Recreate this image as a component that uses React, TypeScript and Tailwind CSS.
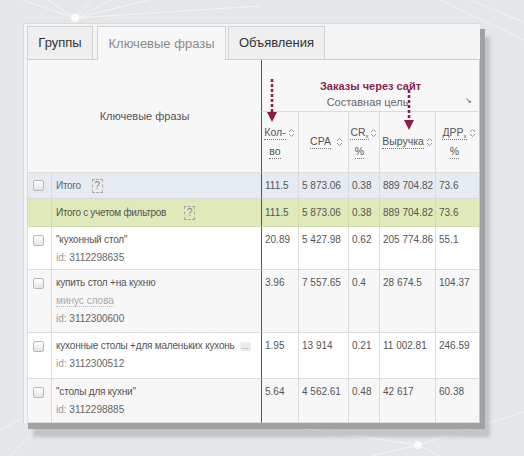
import React from "react";

type Row = {
  id: string;
  label: string;
  extra?: "minus" | "more";
  qty: string;
  cpa: string;
  cr: string;
  revenue: string;
  drr: string;
  height: string;
  bg: string;
};

const rows: Row[] = [
  { id: "3112298635", label: "\"кухонный стол\"", qty: "20.89", cpa: "5 427.98", cr: "0.62", revenue: "205 774.86", drr: "55.1", height: "h-[43px]", bg: "bg-white" },
  { id: "3112300600", label: "купить стол +на кухню", extra: "minus", qty: "3.96", cpa: "7 557.65", cr: "0.4", revenue: "28 674.5", drr: "104.37", height: "h-[63px]", bg: "bg-[#f7f7f7]" },
  { id: "3112300512", label: "кухонные столы +для маленьких кухонь", extra: "more", qty: "1.95", cpa: "13 914", cr: "0.21", revenue: "11 002.81", drr: "246.59", height: "h-[46px]", bg: "bg-white" },
  { id: "3112298885", label: "\"столы для кухни\"", qty: "5.64", cpa: "4 562.61", cr: "0.48", revenue: "42 617", drr: "60.38", height: "h-[44px]", bg: "bg-[#f7f7f7]" },
];

const totals = ["111.5", "5 873.06", "0.38", "889 704.82", "73.6"];

const Checkbox = () => (
  <span className="inline-block w-[11px] h-[11px] rounded-[2px] border border-[#b8b8b8] bg-linear-to-b from-white to-[#e4e4e4]" />
);

const Hint = () => (
  <span className="inline-flex items-center justify-center w-[11px] h-[14px] border border-dashed border-[#a8a8a8] text-[#888] text-[10px] leading-none">?</span>
);

const SortIcon = () => (
  <svg width="7" height="10" viewBox="0 0 7 10" className="shrink-0">
    <path d="M1 4 L3.5 1.5 L6 4" fill="none" stroke="#9a9a9a" strokeWidth="1" />
    <path d="M1 6 L3.5 8.5 L6 6" fill="none" stroke="#9a9a9a" strokeWidth="1" />
  </svg>
);

const Dotted = ({ children }: { children: React.ReactNode }) => (
  <span className="border-b border-dotted border-[#777] leading-[13px]">{children}</span>
);

type HeadProps = { first: React.ReactNode; second?: React.ReactNode; pr?: string };

const HeadCell = ({ first, second, pr = "pr-[2px]" }: HeadProps) => (
  <th className={`border-l border-b border-[#dcdcdc] align-middle font-normal p-0 ${pr}`}>
    <div className="flex items-start">
      <div className="flex-1 flex flex-col items-center gap-[5px]">
        <Dotted>{first}</Dotted>
        {second && <Dotted>{second}</Dotted>}
      </div>
      <div className="pt-[2px]">
        <SortIcon />
      </div>
    </div>
  </th>
);

const num = "border-l border-b border-[#dcdcdc] align-top pl-[3px] pt-[4px] leading-[18px] whitespace-nowrap";

const App = () => {
  return (
    <div className="relative w-[524px] h-[456px] overflow-hidden bg-[#e4e7ea] pl-[23px] pt-[23px] font-['Liberation_Sans',Arial,sans-serif] text-[#555]">
      {/* background lines */}
      <svg className="absolute inset-0 pointer-events-none" width="524" height="456">
        <g stroke="#ffffff" strokeOpacity="0.5" strokeWidth="1" fill="none">
          <path d="M75 18 L22 0" />
          <path d="M75 18 L48 0" />
          <path d="M75 18 L92 0" />
          <path d="M75 18 L112 0" />
          <path d="M75 18 L150 0" />
          <path d="M75 18 L260 6" />
          <path d="M440 0 L524 40" />
          <path d="M470 0 L524 22" />
          <path d="M418 445 L524 412" />
          <path d="M418 445 L300 428" />
          <path d="M418 445 L372 456" />
          <path d="M418 445 L440 456" />
          <path d="M0 430 L70 392" />
          <path d="M10 456 L45 420" />
        </g>
        <circle cx="75" cy="18" r="4" fill="#ffffff" fillOpacity="0.8" />
        <circle cx="418" cy="445" r="4" fill="#ffffff" fillOpacity="0.7" />
      </svg>

      <div className="relative w-[457px] h-[400px] bg-[#f3f3f3] border-t border-l border-[#dadada] pl-[3px] pt-[3px] shadow-[5px_6px_0_#a1a1a1,10px_14px_3px_rgba(150,155,160,0.45)]">
        {/* tabs */}
        <div className="flex items-end h-[33px] border-b border-[#cfcfcf] text-[13px]">
          <div className="w-[66px] h-[33px] flex items-center justify-center border border-b-0 border-[#d2d2d2] bg-[#efefef] text-[#333]">Группы</div>
          <div className="ml-[4px] w-[129px] h-[34px] -mb-px flex items-center justify-center border border-b-0 border-[#d2d2d2] bg-[#f7f7f7] text-[#8a8a8a]">Ключевые фразы</div>
          <div className="ml-[2px] w-[97px] h-[33px] flex items-center justify-center border border-b-0 border-[#d2d2d2] bg-[#efefef] text-[#333]">Объявления</div>
        </div>

        {/* table */}
        <table className="table-fixed border-separate border-spacing-0 w-[453px] text-[10px]">
          <colgroup>
            <col className="w-[24px]" />
            <col className="w-[210px]" />
            <col className="w-[37px]" />
            <col className="w-[50px]" />
            <col className="w-[31px]" />
            <col className="w-[56px]" />
            <col className="w-[45px]" />
          </colgroup>
          <thead className="bg-[#f7f7f7]">
            <tr className="h-[52px]">
              <th colSpan={2} rowSpan={2} className="border-l border-b border-[#dcdcdc] font-normal text-[11px] text-[#555] align-middle pt-[1px]">
                Ключевые фразы
              </th>
              <th colSpan={5} className="relative border-l border-l-[#555] border-b border-b-[#dcdcdc] border-r border-r-[#c8c8c8] align-bottom pb-[1px] font-normal">
                <div className="text-[11px] leading-[16px] font-bold text-[#8b1f4d]">Заказы через сайт</div>
                <div className="text-[11px] leading-[16px] text-[#666] pr-[6px]">Составная цель</div>
                <span className="absolute right-[7px] bottom-[6px] text-[8px] text-[#555] leading-none">↘</span>
              </th>
            </tr>
            <tr className="h-[61px] text-[10.5px] text-[#555]">
              <th className="border-l border-b border-l-[#555] border-b-[#dcdcdc] align-middle font-normal p-0 pr-[3px]">
                <div className="flex items-start">
                  <div className="flex-1 flex flex-col items-center gap-[5px]">
                    <Dotted>Кол-</Dotted>
                    <Dotted>во</Dotted>
                  </div>
                  <div className="pt-[2px]"><SortIcon /></div>
                </div>
              </th>
              <th className="border-l border-b border-[#dcdcdc] align-middle font-normal p-0 pr-[5px]">
                <div className="flex items-center">
                  <div className="flex-1 flex justify-center pl-[6px]"><Dotted>CPA</Dotted></div>
                  <SortIcon />
                </div>
              </th>
              <HeadCell first={<>CR<sub className="text-[6px] align-[-1px]">x</sub></>} second="%" />
              <th className="border-l border-b border-[#dcdcdc] align-middle font-normal p-0 pr-[2px]">
                <div className="flex items-center">
                  <div className="flex-1 flex justify-center"><Dotted>Выручка</Dotted></div>
                  <SortIcon />
                </div>
              </th>
              <th className="border-l border-b border-r border-[#dcdcdc] border-r-[#c8c8c8] align-middle font-normal p-0 pr-[3px]">
                <div className="flex items-start">
                  <div className="flex-1 flex flex-col items-center gap-[5px] pl-[4px]">
                    <Dotted>ДРР<sub className="text-[6px] align-[-1px]">x</sub></Dotted>
                    <Dotted>%</Dotted>
                  </div>
                  <div className="pt-[2px]"><SortIcon /></div>
                </div>
              </th>
            </tr>
          </thead>
          <tbody>
            <tr className="h-[26px] bg-[#e5ebf1]">
              <td className="border-l border-b border-[#d6dbe0] align-middle pl-[5px]"><div className="flex"><Checkbox /></div></td>
              <td className="border-l border-b border-[#d6dbe0] align-middle pl-[4px] tracking-[-0.3px]">
                <div className="flex items-center">
                  <span className="text-[#4e6c8c]">Итого</span>
                  <span className="ml-[11px]"><Hint /></span>
                </div>
              </td>
              {totals.map((v, i) => (
                <td key={i} className={`border-b border-[#d6dbe0] align-middle pl-[3px] whitespace-nowrap border-l ${i === 0 ? "border-l-[#555]" : ""} ${i === 4 ? "border-r border-r-[#c8c8c8]" : ""}`}>{v}</td>
              ))}
            </tr>
            <tr className="h-[28px] bg-[#dfe9b9]">
              <td className="border-l border-b border-[#d2dbb0] align-middle" />
              <td className="border-l border-b border-[#d2dbb0] align-middle pl-[4px] tracking-[-0.3px]">
                <div className="flex items-center">
                  <span>Итого с учетом фильтров</span>
                  <span className="ml-[18px]"><Hint /></span>
                </div>
              </td>
              {totals.map((v, i) => (
                <td key={i} className={`border-b border-[#d2dbb0] align-middle pl-[3px] whitespace-nowrap border-l ${i === 0 ? "border-l-[#555]" : ""} ${i === 4 ? "border-r border-r-[#c8c8c8]" : ""}`}>{v}</td>
              ))}
            </tr>
            {rows.map((r) => (
              <tr key={r.id} className={`${r.height} ${r.bg}`}>
                <td className="border-l border-b border-[#dcdcdc] align-top pl-[5px] pt-[8px]"><div className="flex"><Checkbox /></div></td>
                <td className="border-l border-b border-[#dcdcdc] align-top pl-[4px] pt-[4px] leading-[18px]">
                  <div className="flex items-center whitespace-nowrap tracking-[-0.2px]">
                    <span>{r.label}</span>
                    {r.extra === "more" && (
                      <span className="ml-[5px] inline-flex items-center h-[9px] px-[2px] rounded-[2px] bg-[#ebebeb] text-[#999] text-[9px] leading-none">...</span>
                    )}
                  </div>
                  {r.extra === "minus" && (
                    <div><span className="text-[#aaa] border-b border-dotted border-[#bbb] leading-[12px]">минус слова</span></div>
                  )}
                  <div>
                    <span className="text-[#9a9a9a]">id:</span> <span className="text-[#666]">{r.id}</span>
                  </div>
                </td>
                <td className={`${num} border-l-[#555]`}>{r.qty}</td>
                <td className={num}>{r.cpa}</td>
                <td className={num}>{r.cr}</td>
                <td className={num}>{r.revenue}</td>
                <td className={`${num} border-r border-r-[#c8c8c8]`}>{r.drr}</td>
              </tr>
            ))}
          </tbody>
        </table>
      </div>

      {/* annotation arrows */}
      <svg className="absolute inset-0 pointer-events-none" width="524" height="456">
        <line x1="272" y1="79" x2="272" y2="113" stroke="#8c1c4c" strokeWidth="2.5" strokeDasharray="3 2" />
        <polygon points="267,112 277,112 272,122" fill="#8c1c4c" />
        <line x1="409" y1="90" x2="409" y2="121" stroke="#8c1c4c" strokeWidth="2.5" strokeDasharray="3 2" />
        <polygon points="404,120 414,120 409,130" fill="#8c1c4c" />
      </svg>
    </div>
  );
};

export default App;
